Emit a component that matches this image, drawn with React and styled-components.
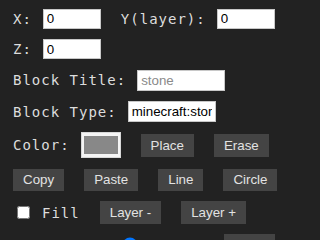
import React from "react";
import styled, { createGlobalStyle } from "styled-components";

const Global = createGlobalStyle`
  html, body {
    margin: 0;
    padding: 0;
    background: #222222;
  }
  body {
    font-family: "Liberation Sans", Arial, sans-serif;
  }
`;

const Page = styled.div`
  display: flex;
  flex-direction: column;
  gap: 10px;
  padding: 8px 0 0 13px;
`;

const Row = styled.div`
  display: flex;
  align-items: center;
  min-height: ${(p) => p.$h}px;
  gap: ${(p) => (p.$gap != null ? p.$gap : 20)}px;
`;

const Field = styled.div`
  display: flex;
  align-items: center;
  gap: ${(p) => (p.$gap != null ? p.$gap : 11)}px;
  padding-left: ${(p) => p.$indent || 0}px;
`;

const Label = styled.label`
  font-family: "DejaVu Sans Mono", monospace;
  font-size: 14px;
  letter-spacing: 1px;
  color: #dddddd;
  white-space: pre;
  line-height: 16px;
`;

const TextInput = styled.input`
  box-sizing: border-box;
  width: ${(p) => p.$w}px;
  height: ${(p) => p.$h}px;
  margin: 0;
  padding: 0 3px;
  border: 1px solid #c8c8c8;
  background: #ffffff;
  color: #000000;
  font-family: "Liberation Sans", Arial, sans-serif;
  font-size: 13.333px;
  outline: none;
  &::placeholder {
    color: #8a8a8a;
  }
`;

const Swatch = styled.input`
  box-sizing: border-box;
  width: 40px;
  height: 26px;
  margin: 0;
  padding: 3px 2px;
  border: 1px solid #d8d8d8;
  background: #f4f4f4;
  cursor: pointer;
  -webkit-appearance: none;
  appearance: none;
  &::-webkit-color-swatch-wrapper {
    padding: 0;
  }
  &::-webkit-color-swatch {
    border: none;
  }
`;

const Button = styled.button`
  box-sizing: border-box;
  height: ${(p) => p.$h || 23}px;
  margin: 0;
  padding: 0 10px;
  border: none;
  border-radius: 0;
  background: #444444;
  color: #e2e2e2;
  font-family: "Liberation Sans", Arial, sans-serif;
  font-size: 13.333px;
  white-space: pre;
  cursor: pointer;
`;

const Check = styled.input`
  width: 13px;
  height: 13px;
  margin: 0;
`;

const Range = styled.input`
  width: 129px;
  height: 16px;
  margin: 0 0 2px;
`;

export default function App() {
  return (
    <>
      <Global />
      <Page>
        <Row $h={21}>
          <Field>
            <Label>X:</Label>
            <TextInput $w={58} $h={20} defaultValue="0" />
          </Field>
          <Field>
            <Label>Y(layer):</Label>
            <TextInput $w={58} $h={20} defaultValue="0" />
          </Field>
        </Row>
        <Row $h={20}>
          <Field>
            <Label>Z:</Label>
            <TextInput $w={58} $h={20} defaultValue="0" />
          </Field>
        </Row>
        <Row $h={22}>
          <Field>
            <Label>Block Title:</Label>
            <TextInput $w={88} $h={21} placeholder="stone" />
          </Field>
        </Row>
        <Row $h={21}>
          <Field>
            <Label>Block Type:</Label>
            <TextInput $w={88} $h={21} defaultValue="minecraft:stone" />
          </Field>
        </Row>
        <Row $h={26}>
          <Field>
            <Label>Color:</Label>
            <Swatch type="color" defaultValue="#888888" />
          </Field>
          <Button>Place</Button>
          <Button>Erase</Button>
        </Row>
        <Row $h={23}>
          <Button $h={22}>Copy</Button>
          <Button $h={22}>Paste</Button>
          <Button $h={22}>Line</Button>
          <Button $h={22}>Circle</Button>
        </Row>
        <Row $h={22}>
          <Field $gap={12} $indent={4}>
            <Check type="checkbox" id="fill" />
            <Label htmlFor="fill">Fill</Label>
          </Field>
          <Button>Layer -</Button>
          <Button>Layer +</Button>
        </Row>
        <Row $h={23} $gap={30}>
          <Field $gap={5}>
            <Label>Size:</Label>
            <Range type="range" min="1" max="9" defaultValue="5" />
          </Field>
          <Button>Save</Button>
        </Row>
      </Page>
    </>
  );
}
